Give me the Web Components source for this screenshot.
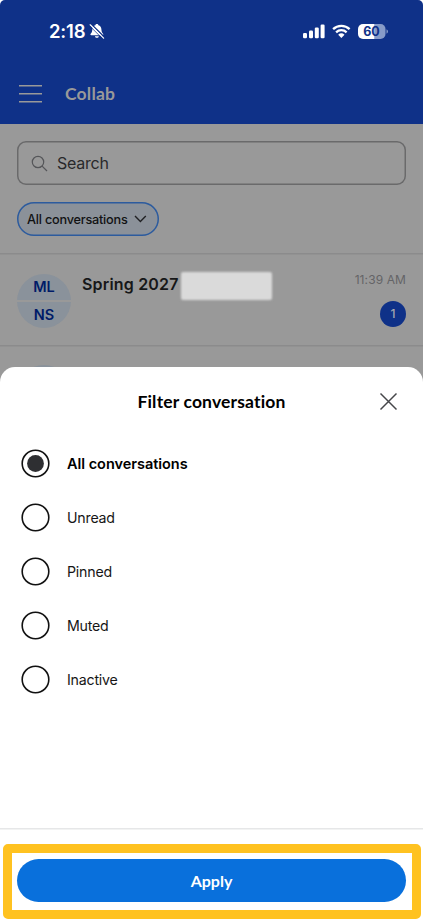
<!DOCTYPE html>
<html lang="en">
<head>
<meta charset="utf-8">
<title>Collab</title>
<style>
html,body{margin:0;height:919px;overflow:hidden;background:#fff}
body{font-family:Inter,"Liberation Sans",sans-serif;color:#000}
</style>
</head>
<body>
<collab-app></collab-app>
<script>
function define(name, markup){
  const t=document.createElement('template');
  t.innerHTML=markup;
  customElements.define(name,class extends HTMLElement{
    constructor(){super();this.attachShadow({mode:'open'}).appendChild(t.content.cloneNode(true));}
  });
}

define('status-bar',`
<style>
:host{display:flex;align-items:center;justify-content:space-between;height:32px;padding:15px 34px 0 49px;color:#fff}
.l{display:flex;align-items:center;gap:4px}
.r{display:flex;align-items:center}
time{font-size:18.5px;font-weight:600;line-height:32px;letter-spacing:-.2px}
svg{display:block}
.bat{display:grid;margin-left:7px}
.bat>*{grid-area:1/1}
.bat span{font-size:12.5px;font-weight:700;line-height:15px;color:#0f3188;width:27px;text-align:center}
</style>
<div class="l"><time>2:18</time>
<svg width="16" height="16" viewBox="0 0 17 17"><path d="M8.400 1.100c.9 0 1.500.5 1.600 1.200 2 .6 3.100 2.300 3.200 4.600.1 2.600.8 3.600 1.700 4.600.6.7.3 1.600-.7 1.600H2.500c-1 0-1.300-.9-.7-1.600.9-1 1.600-2 1.700-4.600.1-2.300 1.200-4 3.300-4.600.1-.7.7-1.200 1.600-1.200z" fill="#fff"/><path d="M6.300 14h4.200c-.3 1.200-1 1.700-2.100 1.700S6.600 15.200 6.300 14z" fill="#fff"/><path d="M2.500 1.200L16.200 14.900" stroke="#0f3188" stroke-width="1.500"/><path d="M1.300 1.900L15.500 16.100" stroke="#fff" stroke-width="1.300" stroke-linecap="round"/><path d="M.8 3.200L14 16.400" stroke="#0f3188" stroke-width=".8"/></svg></div>
<div class="r">
<svg width="22" height="15" viewBox="0 0 22 15" fill="#fff"><rect y="9" width="4" height="5.200" rx="1.200"/><rect x="6" y="6.500" width="4" height="7.700" rx="1.200"/><rect x="11.800" y="3.500" width="4" height="10.700" rx="1.200"/><rect x="17.600" y=".5" width="4" height="13.700" rx="1.200"/></svg>
<svg style="margin-left:7px" width="19" height="15" viewBox="0 0 19 15"><g fill="none" stroke="#fff" stroke-width="2.300"><path d="M1.100 5.100a12 12 0 0 1 16.500 0"/><path d="M4.100 8.300a7.600 7.600 0 0 1 10.500 0"/></g><path d="M6.200 10.700a4.700 4.700 0 0 1 6.300 0L9.350 14.100z" fill="#fff"/></svg>
<div class="bat"><svg width="31" height="15" viewBox="0 0 31 15"><path d="M16.500 0H22.500a5 5 0 0 1 5 5v5a5 5 0 0 1-5 5h-6z" fill="#879bc8"/><path d="M5 0H16.500V15H5a5 5 0 0 1-5-5V5a5 5 0 0 1 5-5z" fill="#fff"/><path d="M28.500 5.200q1.500.7 1.500 2.300t-1.500 2.300z" fill="#879bc8"/></svg><span>60</span></div>
</div>`);

define('app-header',`
<style>
:host{display:block;height:124px;background:#0f3188;border-radius:5px 5px 0 0}
.nav{display:flex;align-items:center;gap:23px;padding:0 19px;height:94px;box-sizing:border-box}
.t{font:700 17.5px/24px Lato,sans-serif;color:#999;letter-spacing:.2px}
svg{display:block}
</style>
<status-bar></status-bar>
<div class="nav"><svg width="23" height="20" viewBox="0 0 23 20"><path d="M0 1.700H23M0 9.700H23M0 17.700H23" stroke="#999" stroke-width="1.500"/></svg><span class="t"><slot></slot></span></div>`);

define('search-field',`
<style>
:host{display:flex;align-items:center;gap:9px;box-sizing:border-box;height:44px;padding-left:14px;box-shadow:inset 0 0 0 1.500px #6a6a6b;border-radius:9px;font-size:16px;color:#29292b;letter-spacing:-.25px}
svg{display:block}
</style>
<svg width="17" height="17" viewBox="0 0 17 17" fill="none" stroke="#555659" stroke-width="1.200"><circle cx="7" cy="7" r="5.700"/><path d="M11.100 11.100L16 16"/></svg><slot></slot>`);

define('filter-chip',`
<style>
:host{display:flex;align-items:center;justify-content:space-between;box-sizing:border-box;width:142px;height:34px;padding:0 12px 0 10px;box-shadow:inset 0 0 0 1.500px #2c5b9e;border-radius:18px;background:#8b9199;font-size:12.700px;letter-spacing:-.22px;font-weight:500;color:#111213}
svg{display:block}
</style><slot></slot>
<svg width="13" height="8" viewBox="0 0 13 8" fill="none" stroke="#202124" stroke-width="1.400"><path d="M1 1l5.400 5.400L11.800 1"/></svg>`);

define('pair-avatar',`
<style>
:host{display:grid;grid-template-rows:26px 26px;gap:2px;width:54px;height:54px;border-radius:50%;overflow:hidden;flex:none;font-weight:600;font-size:14.500px;line-height:26px;text-align:center;color:#001b68}
div{background:#8a929b}
</style><div><slot name="top"></slot></div><div><slot name="bottom"></slot></div>`);

define('conversation-row',`
<style>
:host{display:flex;box-sizing:border-box;height:92px;padding:21px 17px 0;box-shadow:inset 0 1.500px #8b8b8c}
.title{display:flex;flex:1;margin-left:11px;font-size:16px;font-weight:600;line-height:20px;letter-spacing:.18px;color:#161718}
.mask{width:91px;height:28px;margin:-2px 0 0 2px;background:#dadada;border-radius:2px;filter:blur(1px)}
.meta{display:flex;flex-direction:column;align-items:flex-end}
.time{font-size:12px;line-height:14px;color:#646467;letter-spacing:.1px;margin-top:-1px}
.badge{width:26px;height:26px;border-radius:50%;background:#0f3188;color:#a5a8b0;font-size:12px;font-weight:500;line-height:26px;text-align:center;margin-top:13.500px}
:host([preview]) .title,:host([preview]) .meta{display:none}
:host([preview]){padding-top:20px}
</style>
<slot name="avatar"></slot>
<div class="title"><slot></slot><span class="mask"></span></div>
<div class="meta"><span class="time"><slot name="time"></slot></span><span class="badge"><slot name="count"></slot></span></div>`);

define('radio-option',`
<style>
:host{display:flex;align-items:center;gap:17px;height:54px;padding-left:21px;font-size:14.200px;letter-spacing:-.22px;color:#161616}
:host([checked]){font-size:14.500px;letter-spacing:-.03px;font-weight:600;color:#000}
svg{display:block}
.dot{display:none}
:host([checked]) .dot{display:block}
</style><svg width="29" height="29" viewBox="0 0 29 29"><circle cx="14.500" cy="14.500" r="13.300" fill="none" stroke="#111" stroke-width="1.600"/><circle class="dot" cx="14.500" cy="14.500" r="8.400" fill="#2e2f32"/></svg><span><slot></slot></span>`);

define('apply-bar',`
<style>
:host{display:block;box-sizing:border-box;height:91px;padding:16px 2px 0 3px;box-shadow:inset 0 1.500px #e6e7e8}
.ring{box-sizing:border-box;height:75px;border:9px solid #ffc220;border-radius:5px;padding:6px 6px 0 5px}
button{display:block;width:100%;height:43px;border:0;padding:0 0 1px;border-radius:22px;background:#0970dc;color:#fff;font:700 16px/43px Lato,sans-serif}
</style>
<div class="ring"><button><slot></slot></button></div>`);

define('filter-sheet',`
<style>
:host{display:flex;flex-direction:column;height:552px;background:#fff;border-radius:15px 15px 0 0}
header{display:grid;grid-template-columns:1fr auto 1fr;align-items:center;height:69px}
h2{margin:0;font:700 17.500px/24px Lato,sans-serif;font-variant-ligatures:none;letter-spacing:.16px;white-space:nowrap;padding-top:1px}
svg{display:block;justify-self:end;margin-right:25px}
.opts{flex:1}
</style>
<header><span></span><h2><slot name="title"></slot></h2>
<svg width="19" height="19" viewBox="0 0 19 19"><path d="M1.500 1.500l16 16M17.500 1.500l-16 16" stroke="#46474a" stroke-width="1.500"/></svg></header>
<div class="opts"><slot></slot></div>
<apply-bar>Apply</apply-bar>`);

define('collab-app',`
<style>
:host{display:grid;width:423px;height:919px;overflow:hidden}
main,.overlay{grid-area:1/1;min-width:0}
.bg{background:#999;height:795px}
.tools{display:flex;flex-direction:column;gap:17px;height:129px;box-sizing:border-box;padding:17px 17px 0}
.overlay{align-self:end}
</style>
<main><app-header>Collab</app-header>
<div class="bg">
<div class="tools"><search-field>Search</search-field><filter-chip>All conversations</filter-chip></div>
<conversation-row><pair-avatar slot="avatar"><span slot="top">ML</span><span slot="bottom">NS</span></pair-avatar>Spring 2027<span slot="time">11:39 AM</span><span slot="count">1</span></conversation-row>
<conversation-row preview><pair-avatar slot="avatar"></pair-avatar></conversation-row>
</div></main>
<filter-sheet class="overlay"><span slot="title">Filter conversation</span>
<radio-option checked>All conversations</radio-option><radio-option>Unread</radio-option><radio-option>Pinned</radio-option><radio-option>Muted</radio-option><radio-option>Inactive</radio-option>
</filter-sheet>`);
</script>
</body>
</html>
